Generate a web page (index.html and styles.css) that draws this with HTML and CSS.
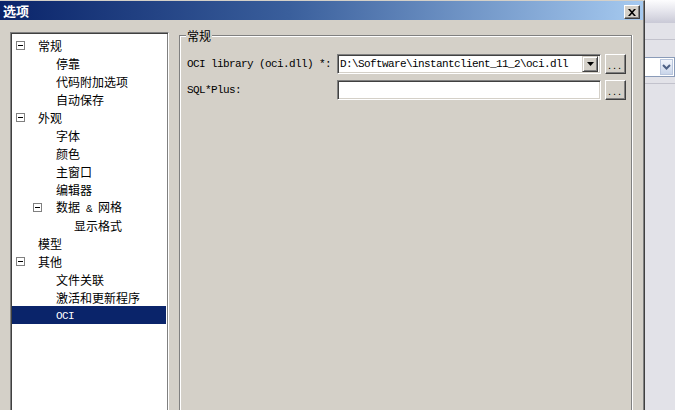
FILE: index.html
```html
<!DOCTYPE html>
<html lang="zh">
<head>
<meta charset="utf-8">
<title>选项</title>
<link rel="stylesheet" href="styles.css">
</head>
<body>
<div class="screen">
  <div class="dialog">
    <div class="titlebar">
      <span class="title">选项</span>
      <button class="close" aria-label="关闭">
        <svg width="8" height="7" viewBox="0 0 8 7"><path d="M0 0h2l2 2.2L6 0h2L5 3.5 8 7H6L4 4.8 2 7H0l3-3.5z" fill="#000"/></svg>
      </button>
    </div>
    <div class="body">
      <div class="tree">
        <div class="row l0"><span class="exp"></span><span class="lbl">常规</span></div>
        <div class="row l1"><span class="sp"></span><span class="lbl">停靠</span></div>
        <div class="row l1"><span class="sp"></span><span class="lbl">代码附加选项</span></div>
        <div class="row l1"><span class="sp"></span><span class="lbl">自动保存</span></div>
        <div class="row l0"><span class="exp"></span><span class="lbl">外观</span></div>
        <div class="row l1"><span class="sp"></span><span class="lbl">字体</span></div>
        <div class="row l1"><span class="sp"></span><span class="lbl">颜色</span></div>
        <div class="row l1"><span class="sp"></span><span class="lbl">主窗口</span></div>
        <div class="row l1"><span class="sp"></span><span class="lbl">编辑器</span></div>
        <div class="row l1 e1"><span class="exp"></span><span class="lbl">数据<span class="mono"> &amp; </span>网格</span></div>
        <div class="row l2"><span class="sp"></span><span class="lbl">显示格式</span></div>
        <div class="row l0"><span class="sp"></span><span class="lbl">模型</span></div>
        <div class="row l0"><span class="exp"></span><span class="lbl">其他</span></div>
        <div class="row l1"><span class="sp"></span><span class="lbl">文件关联</span></div>
        <div class="row l1"><span class="sp"></span><span class="lbl">激活和更新程序</span></div>
        <div class="row l1 sel"><span class="sp"></span><span class="lbl mono">OCI</span></div>
      </div>
      <div class="group">
        <div class="legend">常规</div>
        <div class="frow">
          <label class="flabel mono">OCI library (oci.dll) *:</label>
          <div class="combo">
            <span class="val mono">D:\Software\instantclient_11_2\oci.dll</span>
            <span class="drop"><svg width="7" height="4" viewBox="0 0 7 4"><path d="M0 0h7L3.5 4z" fill="#000"/></svg></span>
          </div>
          <button class="dots">...</button>
        </div>
        <div class="frow">
          <label class="flabel mono">SQL*Plus:</label>
          <div class="edit"></div>
          <button class="dots">...</button>
        </div>
      </div>
    </div>
  </div>
  <div class="bgwin">
    <div class="bgtitle"></div>
    <div class="bgline first"></div>
    <div class="bgcombo"><span class="bgarrow"><svg width="9" height="6" viewBox="0 0 9 6"><path d="M1 1l3.5 3.5L8 1" stroke="#4d6185" stroke-width="2" fill="none"/></svg></span></div>
    <div class="bgline second"></div>
  </div>
</div>
</body>
</html>
```

FILE: styles.css
```css
* { box-sizing: border-box; }
html, body {
  margin: 0;
  padding: 0;
  width: 675px;
  height: 410px;
  overflow: hidden;
}
body {
  font-family: "Noto Sans CJK SC", sans-serif;
  font-size: 12px;
  color: #000;
  background: #e2e2e8;
}
.mono {
  font-family: "Liberation Mono", "Noto Sans CJK SC", monospace;
  font-size: 11px;
  letter-spacing: -0.6px;
  white-space: pre;
}
.screen {
  display: flex;
  height: 410px;
}
.dialog {
  width: 645px;
  height: 410px;
  background: #d4d0c8;
  border-top: 1px solid #d4d0c8;
  border-right: 1px solid #404040;
  box-shadow: inset -1px 0 0 #808080;
  display: flex;
  flex-direction: column;
  flex-shrink: 0;
}
.titlebar {
  height: 19px;
  flex-shrink: 0;
  margin-right: 1px;
  background: linear-gradient(to right, #0a246a 0%, #3a5f9c 45%, #a6caf0 100%);
  display: flex;
  align-items: center;
  justify-content: space-between;
  padding: 0 3px 0 3px;
}
.title {
  color: #fff;
  font-weight: bold;
  font-size: 13px;
  line-height: 19px;
}
.close {
  width: 16px;
  height: 14px;
  margin-top: 3px;
  padding: 0;
  background: #d4d0c8;
  border: 1px solid;
  border-color: #fff #404040 #404040 #fff;
  box-shadow: inset -1px -1px 0 #808080;
  display: flex;
  align-items: center;
  justify-content: center;
}
.body {
  flex: 1;
  min-height: 0;
  display: flex;
  align-items: stretch;
  padding: 12px 0 0 10px;
  gap: 10px;
}
.tree {
  width: 159px;
  background: #fff;
  border-left: 1px solid #808080;
  border-top: 1px solid #808080;
  border-right: 1px solid #fff;
  box-shadow: inset 1px 1px 0 #404040, inset -1px 0 0 #808080;
  padding: 3px 2px 0 1px;
}
.row {
  height: 18px;
  display: flex;
  align-items: center;
  line-height: 18px;
  white-space: nowrap;
}
.lbl { padding-top: 1px; }
.row.l0 { padding-left: 4px; }
.row.l1 { padding-left: 22px; }
.row.l2 { padding-left: 40px; }
.row.e1 { padding-left: 21px; }
.exp, .sp {
  width: 9px;
  height: 9px;
  margin-right: 13px;
  flex-shrink: 0;
}
.exp {
  border: 1px solid #808080;
  background: #fff;
  position: relative;
}
.exp::after {
  content: "";
  position: absolute;
  left: 1px;
  top: 3px;
  width: 5px;
  height: 1px;
  background: #000;
}
.row.e1 .exp { margin-right: 14px; }
.row.sel {
  background: #0a246a;
  color: #fff;
}
.group {
  position: relative;
  margin-top: 3px;
  width: 453px;
  border: 1px solid #808080;
  border-bottom-width: 0;
  box-shadow: inset 1px 1px 0 #fff, 1px 0 0 #fff;
  padding: 18px 0 0 7px;
  display: flex;
  flex-direction: column;
  gap: 6px;
}
.legend {
  position: absolute;
  top: -7px;
  left: 6px;
  padding: 0 1px;
  background: #d4d0c8;
  line-height: 14px;
}
.frow {
  display: flex;
  align-items: center;
  height: 20px;
}
.flabel {
  width: 150px;
  flex-shrink: 0;
}
.combo, .edit {
  width: 264px;
  height: 20px;
  background: #fff;
  border: 1px solid;
  border-color: #808080 #fff #fff #808080;
  box-shadow: inset 1px 1px 0 #404040, inset -1px -1px 0 #d4d0c8;
  display: flex;
  align-items: center;
  padding: 0 2px 0 2px;
}
.val {
  flex: 1;
  overflow: hidden;
  line-height: 16px;
}
.drop {
  width: 16px;
  height: 16px;
  background: #d4d0c8;
  border: 1px solid;
  border-color: #d4d0c8 #404040 #404040 #d4d0c8;
  box-shadow: inset 1px 1px 0 #fff, inset -1px -1px 0 #808080;
  display: flex;
  align-items: center;
  justify-content: center;
}
.dots {
  width: 21px;
  height: 20px;
  margin-left: 4px;
  padding: 0 0 3px 0;
  background: #d4d0c8;
  border: 1px solid;
  border-color: #fff #404040 #404040 #fff;
  box-shadow: inset -1px -1px 0 #808080;
  font-family: "Liberation Sans", sans-serif;
  font-size: 11px;
  letter-spacing: 2px;
  display: flex;
  align-items: flex-end;
  justify-content: center;
  line-height: 10px;
  color: #000;
}
.bgwin {
  flex: 1;
  background: #e2e2e8;
  display: flex;
  flex-direction: column;
}
.bgtitle {
  height: 23px;
  background: linear-gradient(to bottom, #fdfdfe 0%, #e4e4ec 50%, #c9c9d6 100%);
}
.bgline {
  height: 1px;
  background: #c2c2cc;
}
.bgline.first { margin-top: 16px; }
.bgline.second { margin-top: 6px; }
.bgcombo {
  margin-top: 17px;
  height: 20px;
  background: #fff;
  border: 1px solid #8a9bb8;
  border-left: none;
  display: flex;
  justify-content: flex-end;
  padding: 1px;
}
.bgarrow {
  width: 13px;
  background: linear-gradient(to bottom, #f2f5fb, #c9d5ea);
  border: 1px solid #b9c6dd;
  display: flex;
  align-items: center;
  justify-content: center;
}
```
